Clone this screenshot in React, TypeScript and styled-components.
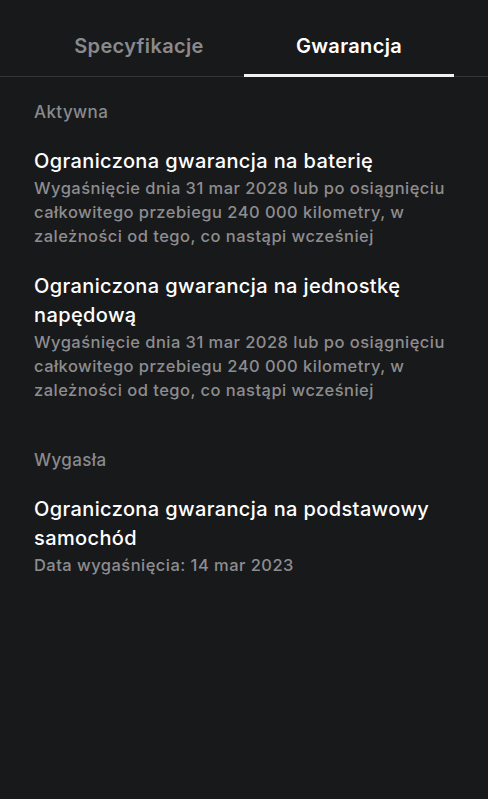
import React from "react";
import styled, { createGlobalStyle } from "styled-components";

const Global = createGlobalStyle`
  html, body { margin: 0; padding: 0; background: #18191b; }
  body { font-family: Inter, "Noto Sans", sans-serif; -webkit-font-smoothing: antialiased; }
  #root { min-height: 100vh; background: #18191b; }
`;

const Page = styled.div`
  width: 488px;
  min-height: 799px;
  background: #18191b;
  color: #fff;
`;

const TabBar = styled.div`
  display: flex;
  padding: 0 34px;
  border-bottom: 1px solid #333436;
`;

const Tab = styled.div<{ $active?: boolean }>`
  flex: 1;
  text-align: center;
  font-size: 20px;
  line-height: 24px;
  font-weight: 600;
  letter-spacing: 0.35px;
  padding: 34px 0 16px;
  margin-bottom: -1px;
  color: ${(p) => (p.$active ? "#ffffff" : "#8a8a8c")};
  border-bottom: 3px solid ${(p) => (p.$active ? "#f2f2f2" : "transparent")};
`;

const Content = styled.div`
  padding: 25px 34px 0;
  display: flex;
  flex-direction: column;
  gap: 48px;
`;

const Section = styled.section`
  display: flex;
  flex-direction: column;
  gap: 24px;
`;

const SectionLabel = styled.div`
  font-size: 17px;
  line-height: 20px;
  font-weight: 500;
  letter-spacing: 0.4px;
  color: #8a8a8c;
  margin-bottom: 1px;
`;

const Item = styled.div`
  display: flex;
  flex-direction: column;
`;

const Title = styled.div`
  font-size: 20px;
  line-height: 29px;
  font-weight: 500;
  letter-spacing: 0.38px;
  color: #ffffff;
`;

const Desc = styled.div`
  font-size: 16.5px;
  line-height: 24px;
  font-weight: 500;
  letter-spacing: 0.46px;
  color: #8d8d8f;
`;

const desc =
  "Wygaśnięcie dnia 31 mar 2028 lub po osiągnięciu całkowitego przebiegu 240 000 kilometry, w zależności od tego, co nastąpi wcześniej";

export default function App() {
  return (
    <Page>
      <Global />
      <TabBar>
        <Tab>Specyfikacje</Tab>
        <Tab $active>Gwarancja</Tab>
      </TabBar>
      <Content>
        <Section>
          <SectionLabel>Aktywna</SectionLabel>
          <Item>
            <Title>Ograniczona gwarancja na baterię</Title>
            <Desc>{desc}</Desc>
          </Item>
          <Item>
            <Title>Ograniczona gwarancja na jednostkę napędową</Title>
            <Desc>{desc}</Desc>
          </Item>
        </Section>
        <Section>
          <SectionLabel>Wygasła</SectionLabel>
          <Item>
            <Title>Ograniczona gwarancja na podstawowy samochód</Title>
            <Desc>Data wygaśnięcia: 14 mar 2023</Desc>
          </Item>
        </Section>
      </Content>
    </Page>
  );
}
